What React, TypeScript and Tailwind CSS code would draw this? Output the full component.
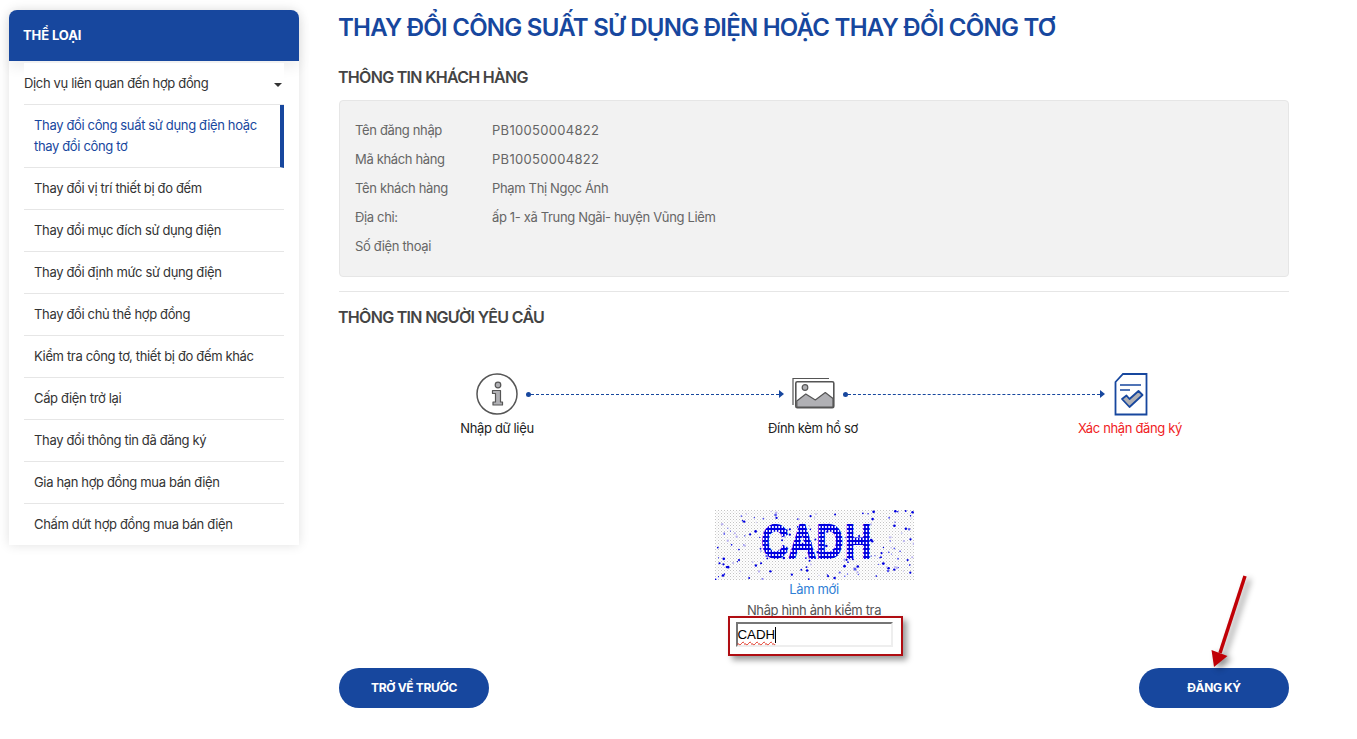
const subItems = [
  'Thay đổi vị trí thiết bị đo đếm',
  'Thay đổi mục đích sử dụng điện',
  'Thay đổi định mức sử dụng điện',
  'Thay đổi chủ thể hợp đồng',
  'Kiểm tra công tơ, thiết bị đo đếm khác',
  'Cấp điện trở lại',
  'Thay đổi thông tin đã đăng ký',
  'Gia hạn hợp đồng mua bán điện',
  'Chấm dứt hợp đồng mua bán điện',
];

const customerRows = [
  ['Tên đăng nhập', 'PB10050004822'],
  ['Mã khách hàng', 'PB10050004822'],
  ['Tên khách hàng', 'Phạm Thị Ngọc Ánh'],
  ['Địa chỉ:', 'ấp 1- xã Trung Ngãi- huyện Vũng Liêm'],
  ['Số điện thoại', ''],
];

// fixed noise for the captcha picture
function makeSpecks() {
  const specks: { x: number; y: number; r: number; c: string }[] = [];
  let seed = 4217;
  const next = () => {
    seed = (seed * 16807) % 2147483647;
    return seed / 2147483647;
  };
  for (let i = 0; i < 190; i++) {
    const pick = next();
    specks.push({
      x: next() * 199,
      y: next() * 70,
      r: 0.5 + next() * 0.9,
      c: pick < 0.65 ? '#0000e0' : pick < 0.85 ? '#b9b2f0' : '#5a5af0',
    });
  }
  return specks;
}
const specks = makeSpecks();

function Sidebar() {
  return (
    <aside className="w-[290px] shrink-0 self-start bg-white rounded-t-lg shadow-[0_0_12px_rgba(0,0,0,0.12)]">
      <div className="h-[51px] flex items-center px-[14px] bg-[#17479e] rounded-t-lg text-white text-[13px] font-bold tracking-[-0.1px] shadow-[0_6px_14px_rgba(0,0,0,0.07)]">
        THỂ LOẠI
      </div>
      <div className="relative mx-[15px] mt-[2px] bg-white">
        <div className="h-[42px] flex items-center justify-between border-b border-[#e6e6e6] text-[#333]">
          <span>Dịch vụ liên quan đến hợp đồng</span>
          <span className="mr-[2px] mt-[2px] border-x-[4px] border-t-[4px] border-x-transparent border-t-[#333]" />
        </div>
        <div className="h-[63px] flex items-center pl-[10px] pr-[20px] border-b border-[#e6e6e6] border-r-[4px] border-r-[#17479e] text-[#17479e] leading-[21px]">
          Thay đổi công suất sử dụng điện hoặc thay đổi công tơ
        </div>
        {subItems.map((item, i) => (
          <div
            key={item}
            className={`flex items-center pl-[10px] text-[#333] ${i < subItems.length - 1 ? 'h-[42px] border-b border-[#e6e6e6]' : 'h-[41px]'}`}
          >
            {item}
          </div>
        ))}
      </div>
    </aside>
  );
}

function InfoIcon() {
  return (
    <svg width="42" height="42" viewBox="0 0 42 42" fill="none">
      <circle cx="21" cy="21" r="20" stroke="#555" strokeWidth="1.5" />
      <circle cx="22" cy="12" r="2.8" fill="#b0b0b4" stroke="#555" strokeWidth="1.2" />
      <path d="M16.5 17.5h8v11.5h2v3h-9.500v-3h2.500v-8.500h-3z" fill="#b0b0b4" stroke="#555" strokeWidth="1.2" strokeLinejoin="round" />
    </svg>
  );
}

function ImageIcon() {
  return (
    <svg width="44" height="34" viewBox="0 0 44 34" fill="none">
      <path d="M1 28V1.500h36" stroke="#555" strokeWidth="1.2" />
      <rect x="3.800" y="4.800" width="38" height="26" rx="1.500" fill="#fff" stroke="#555" strokeWidth="1.600" />
      <circle cx="13" cy="10.500" r="2.800" fill="#b0b0b4" stroke="#555" strokeWidth="1.200" />
      <path d="M4.800 27V24l9-7 9.500 6 10-7.500 7.700 6V30H4.800z" fill="#b0b0b4" stroke="#555" strokeWidth="1.200" strokeLinejoin="round" />
    </svg>
  );
}

function DocIcon() {
  return (
    <svg width="34" height="43" viewBox="0 0 34 43" fill="none">
      <path d="M9 1h23.500v40.500H1.500V9z" fill="#fff" stroke="#17479e" strokeWidth="1.800" />
      <path d="M6 12h21M6 17h10" stroke="#17479e" strokeWidth="1.500" />
      <path d="M8 26l4.500-3.500 3 3.500 9-8 4 4-13 12z" fill="#b0b0b4" stroke="#17479e" strokeWidth="1.800" strokeLinejoin="round" />
    </svg>
  );
}

function Connector({ width }: { width: string }) {
  return (
    <div className={`flex items-center ${width}`}>
      <span className="w-[5px] h-[5px] rounded-full bg-[#17479e] shrink-0" />
      <span className="flex-1 border-t border-dashed border-[#17479e]" />
      <span className="border-y-[4px] border-l-[5px] border-y-transparent border-l-[#17479e] shrink-0" />
    </div>
  );
}

function Steps() {
  return (
    <div className="mt-[45px]">
      <div className="h-[42px] flex items-center pl-[137px]">
        <InfoIcon />
        <div className="ml-[8px]">
          <Connector width="w-[258px]" />
        </div>
        <div className="ml-[8px] w-[51px] flex items-center">
          <ImageIcon />
        </div>
        <Connector width="w-[262px]" />
        <div className="ml-[9px]">
          <DocIcon />
        </div>
      </div>
      <div className="flex pl-[98px] mt-[3px] h-[20px] leading-[20px] text-center">
        <span className="w-[120px] text-[#222]">Nhập dữ liệu</span>
        <span className="w-[120px] ml-[196px] text-[#222]">Đính kèm hồ sơ</span>
        <span className="w-[120px] ml-[197px] text-[#f01c24]">Xác nhận đăng ký</span>
      </div>
    </div>
  );
}

function Captcha() {
  return (
    <svg width="199" height="70" viewBox="0 0 199 70" className="block">
      <defs>
        <pattern id="dots" width="3" height="3" patternUnits="userSpaceOnUse">
          <rect width="3" height="3" fill="#fff" />
          <rect width="1" height="1" fill="#c4c4c4" />
          <rect x="1.500" y="1.500" width="1" height="1" fill="#dadada" />
        </pattern>
        <pattern id="mesh" width="4" height="4" patternUnits="userSpaceOnUse">
          <rect width="4" height="4" fill="#0000e0" />
          <rect x="1" y="1" width="2" height="2" fill="#fff" />
        </pattern>
      </defs>
      <rect width="199" height="70" fill="url(#dots)" />
      {specks.map((s, i) => (
        <circle key={i} cx={s.x} cy={s.y} r={s.r} fill={s.c} />
      ))}
      <text
        transform="translate(47 47) scale(0.78 1)"
        fontFamily="Liberation Sans, sans-serif"
        fontSize="45"
        letterSpacing="4"
        fill="none"
        stroke="url(#mesh)"
        strokeWidth="4"
      >
        CADH
      </text>
    </svg>
  );
}

function CaptchaBlock() {
  return (
    <div className="mt-[72px] flex flex-col items-center">
      <Captcha />
      <a className="h-[20px] -mt-px leading-[20px] text-[#2f7fd6]">Làm mới</a>
      <span className="h-[20px] leading-[20px] mt-px text-[#555]">Nhập hình ảnh kiểm tra</span>
      <div className="relative w-[157px] h-[25px] mt-[2px]">
        <div className="h-full flex items-center border-2 border-t-[#767676] border-l-[#767676] border-r-[#eee] border-b-[#eee] bg-white font-['Liberation_Sans',sans-serif] text-[13.300px] tracking-normal text-black">
          <span className="underline decoration-wavy decoration-[#e0301e] decoration-1 underline-offset-2">CADH</span>
          <span className="w-px h-[16px] bg-black" />
        </div>
        <div className="absolute -left-[8px] -right-[10px] -top-[6px] -bottom-[9px] border-[2.500px] border-[#b00d12] shadow-[4px_4px_6px_rgba(0,0,0,0.4)]" />
      </div>
    </div>
  );
}

function Arrow() {
  return (
    <svg width="60" height="110" viewBox="0 0 60 110" fill="none" className="absolute left-[60px] -top-[95px] z-10 drop-shadow-[4px_3px_3px_rgba(0,0,0,0.45)]">
      <path d="M46 3L21 80" stroke="#c00006" strokeWidth="3.500" />
      <path d="M15 94L12.500 77L28.500 83z" fill="#c00006" />
    </svg>
  );
}

export default function App() {
  return (
    <div className="h-[739px] overflow-hidden bg-white flex gap-[40px] pl-[9px] pt-[10px] font-['Inter',sans-serif] text-[13px] tracking-[-0.35px]">
      <Sidebar />
      <main className="w-[950px] shrink-0">
        <h1 className="h-[36px] -ml-px leading-[36px] text-[24px] font-semibold text-[#17479e] tracking-[-0.75px]">
          THAY ĐỔI CÔNG SUẤT SỬ DỤNG ĐIỆN HOẶC THAY ĐỔI CÔNG TƠ
        </h1>
        <h3 className="mt-[20px] h-[22px] -ml-px leading-[22px] text-[16px] font-semibold text-[#444] tracking-[-0.7px]">
          THÔNG TIN KHÁCH HÀNG
        </h3>
        <div className="mt-[12px] h-[177px] px-[15px] py-[15px] bg-[#f2f2f2] border border-[#e6e6e6] rounded">
          {customerRows.map(([label, value]) => (
            <div key={label} className="h-[29px] flex items-center text-[#666]">
              <span className="w-[137px] shrink-0">{label}</span>
              <span className={value.startsWith('PB') ? 'tracking-[0.3px]' : ''}>{value}</span>
            </div>
          ))}
        </div>
        <div className="mt-[14px] border-t border-[#e6e6e6]" />
        <h3 className="mt-[14px] h-[22px] -ml-px leading-[22px] text-[16px] font-semibold text-[#444] tracking-[-0.7px]">
          THÔNG TIN NGƯỜI YÊU CẦU
        </h3>
        <Steps />
        <CaptchaBlock />
        <div className="mt-[21px] flex justify-between">
          <button className="w-[150px] h-[40px] rounded-full bg-[#17479e] text-white text-[12px] font-bold">
            TRỞ VỀ TRƯỚC
          </button>
          <div className="relative">
            <button className="w-[150px] h-[40px] rounded-full bg-[#17479e] text-white text-[12px] font-bold">
              ĐĂNG KÝ
            </button>
            <Arrow />
          </div>
        </div>
      </main>
    </div>
  );
}
